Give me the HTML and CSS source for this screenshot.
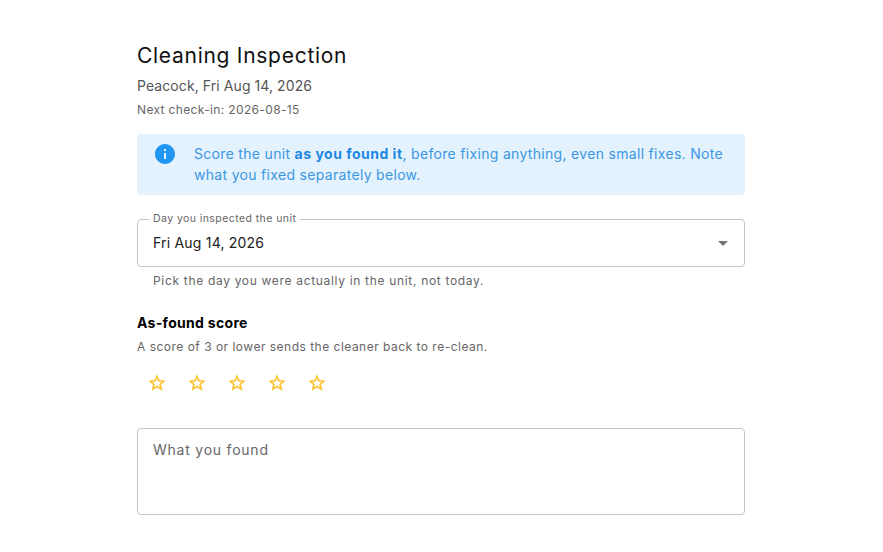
FILE: index.html
```html
<!DOCTYPE html>
<html lang="en">
<head>
    <meta charset="UTF-8">
    <title>Cleaning Inspection</title>
    <link rel="stylesheet" href="styles.css">
</head>
<body>
    <div class="inspection-form">
        <h1>Cleaning Inspection</h1>
        <p class="unit-line">Peacock, Fri Aug 14, 2026</p>
        <p class="next-line">Next check-in: 2026-08-15</p>

        <div class="alert">
            <svg class="alert-icon" viewBox="0 0 24 24"><path d="M12 2C6.48 2 2 6.48 2 12s4.48 10 10 10 10-4.48 10-10S17.52 2 12 2zm1 15h-2v-6h2v6zm0-8h-2V7h2v2z"/></svg>
            <div class="alert-text">Score the unit <strong>as you found it</strong>, before fixing anything, even small fixes. Note what you fixed separately below.</div>
        </div>

        <fieldset class="select-box">
            <legend>Day you inspected the unit</legend>
            <span class="select-value">Fri Aug 14, 2026</span>
            <svg class="select-arrow" viewBox="0 0 24 24"><path d="M7 10l5 5 5-5z"/></svg>
        </fieldset>
        <p class="helper">Pick the day you were actually in the unit, not today.</p>

        <h2>As-found score</h2>
        <p class="score-note">A score of 3 or lower sends the cleaner back to re-clean.</p>
        <div class="stars">
            <svg viewBox="0 0 24 24"><path d="M22 9.24l-7.19-.62L12 2 9.19 8.63 2 9.24l5.46 4.73L5.82 21 12 17.27 18.18 21l-1.63-7.03L22 9.24zM12 15.4l-3.76 2.27 1-4.28-3.32-2.88 4.38-.38L12 6.1l1.71 4.04 4.38.38-3.32 2.88 1 4.28L12 15.4z"/></svg>
            <svg viewBox="0 0 24 24"><path d="M22 9.24l-7.19-.62L12 2 9.19 8.63 2 9.24l5.46 4.73L5.82 21 12 17.27 18.18 21l-1.63-7.03L22 9.24zM12 15.4l-3.76 2.27 1-4.28-3.32-2.88 4.38-.38L12 6.1l1.71 4.04 4.38.38-3.32 2.88 1 4.28L12 15.4z"/></svg>
            <svg viewBox="0 0 24 24"><path d="M22 9.24l-7.19-.62L12 2 9.19 8.63 2 9.24l5.46 4.73L5.82 21 12 17.27 18.18 21l-1.63-7.03L22 9.24zM12 15.4l-3.76 2.27 1-4.28-3.32-2.88 4.38-.38L12 6.1l1.71 4.04 4.38.38-3.32 2.88 1 4.28L12 15.4z"/></svg>
            <svg viewBox="0 0 24 24"><path d="M22 9.24l-7.19-.62L12 2 9.19 8.63 2 9.24l5.46 4.73L5.82 21 12 17.27 18.18 21l-1.63-7.03L22 9.24zM12 15.4l-3.76 2.27 1-4.28-3.32-2.88 4.38-.38L12 6.1l1.71 4.04 4.38.38-3.32 2.88 1 4.28L12 15.4z"/></svg>
            <svg viewBox="0 0 24 24"><path d="M22 9.24l-7.19-.62L12 2 9.19 8.63 2 9.24l5.46 4.73L5.82 21 12 17.27 18.18 21l-1.63-7.03L22 9.24zM12 15.4l-3.76 2.27 1-4.28-3.32-2.88 4.38-.38L12 6.1l1.71 4.04 4.38.38-3.32 2.88 1 4.28L12 15.4z"/></svg>
        </div>

        <div class="text-box">What you found</div>
    </div>
</body>
</html>
```

FILE: styles.css
```css
body {
    font-family: Inter, "Open Sans", sans-serif;
    background-color: white;
    color: #000;
    margin: 0;
}

.inspection-form {
    width: 608px;
    margin-left: 137px;
    padding-top: 41px;
}

h1 {
    font-size: 21px;
    font-weight: 400;
    line-height: 30px;
    letter-spacing: 0.72px;
    margin: 0;
    color: #111;
}

.unit-line {
    font-size: 14px;
    line-height: 20px;
    margin: 5px 0 0;
    color: #555;
    letter-spacing: 0.08px;
}

.next-line {
    font-size: 12px;
    line-height: 18px;
    margin: 5px 0 0;
    color: #666;
    letter-spacing: 0.35px;
}

.alert {
    display: flex;
    background-color: #e3f2fd;
    border-radius: 4px;
    margin-top: 15px;
    padding: 8px 16px;
    height: 61px;
    box-sizing: border-box;
}

.alert-icon {
    width: 24px;
    height: 24px;
    fill: #2196f3;
    margin-right: 17px;
    flex-shrink: 0;
}

.alert-text {
    font-size: 14px;
    line-height: 21px;
    color: #3b97e3;
    padding-top: 1px;
    letter-spacing: 0.31px;
}

.alert-text strong {
    color: #1e88e5;
    letter-spacing: 0.5px;
}

.select-box {
    position: relative;
    margin: 18px 0 0;
    padding: 0 15px;
    height: 54px;
    box-sizing: border-box;
    border: 1px solid #c4c4c4;
    border-radius: 4px;
    display: block;
    min-width: 0;
}

.select-box legend {
    font-size: 10.5px;
    line-height: 12px;
    padding: 0 4px;
    margin-left: -4px;
    color: #666;
    letter-spacing: 0.43px;
}

.select-value {
    display: block;
    font-size: 14px;
    line-height: 20px;
    margin-top: 8px;
    color: #212121;
    letter-spacing: 0.2px;
}

.select-arrow {
    position: absolute;
    right: 9px;
    top: 6px;
    width: 24px;
    height: 24px;
    fill: #757575;
}

.helper {
    font-size: 12px;
    line-height: 18px;
    margin: 5px 0 0 16px;
    color: #666;
    letter-spacing: 0.68px;
}

h2 {
    font-size: 14px;
    font-weight: 700;
    line-height: 20px;
    letter-spacing: 0.3px;
    margin: 23px 0 0;
}

.score-note {
    font-size: 12px;
    line-height: 18px;
    margin: 5px 0 0;
    color: #666;
    letter-spacing: 0.49px;
}

.stars {
    display: flex;
    gap: 20px;
    margin-top: 17px;
    padding-left: 10px;
}

.stars svg {
    width: 20px;
    height: 20px;
    fill: #fbc02d;
    stroke: #fbc02d;
    stroke-width: 0.4px;
}

.text-box {
    margin-top: 35px;
    height: 87px;
    box-sizing: border-box;
    border: 1px solid #c4c4c4;
    border-radius: 4px;
    padding: 11px 15px;
    font-size: 14px;
    line-height: 20px;
    color: #666;
    letter-spacing: 0.77px;
}
```
